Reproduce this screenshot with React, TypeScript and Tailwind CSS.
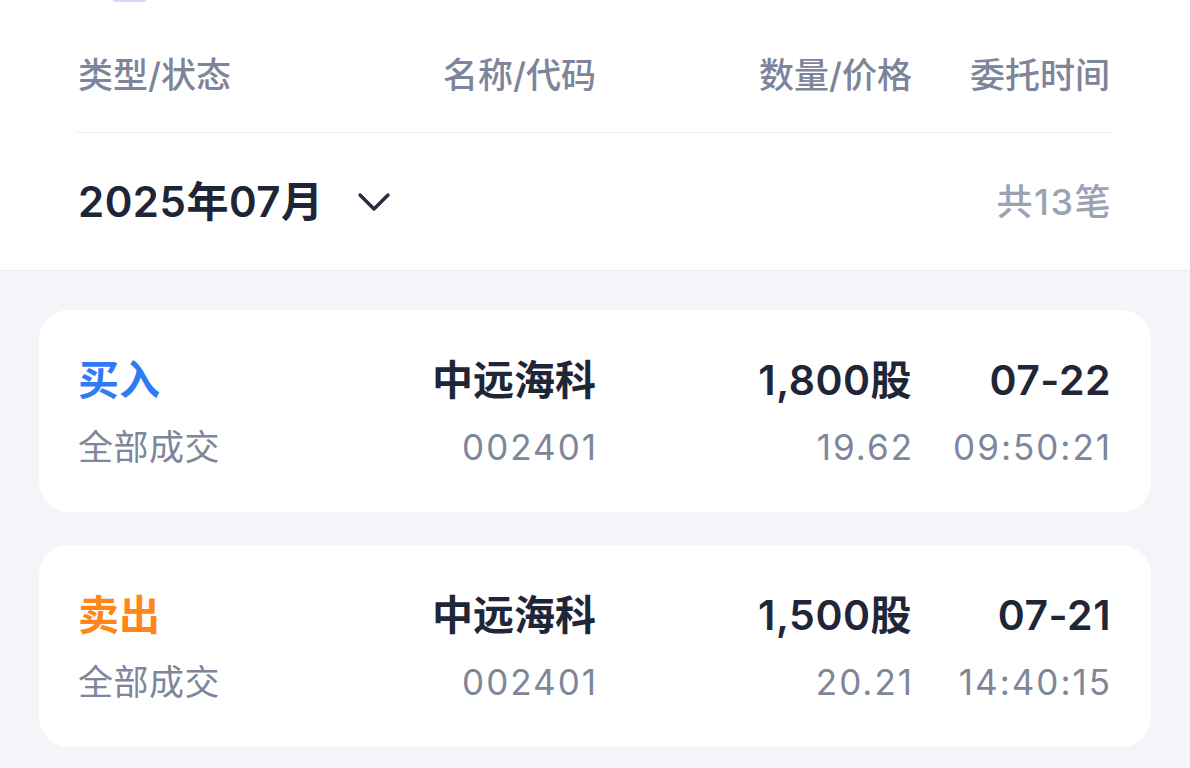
import React from "react";

const font = { fontFamily: '"Inter", "Noto Sans CJK SC", sans-serif' };

type Row = {
  type: string;
  color: string;
  status: string;
  name: string;
  code: string;
  qty: string;
  price: string;
  date: string;
  time: string;
};

const rows: Row[] = [
  { type: "买入", color: "text-[#2e7bf5]", status: "全部成交", name: "中远海科", code: "002401", qty: "1,800股", price: "19.62", date: "07-22", time: "09:50:21" },
  { type: "卖出", color: "text-[#ff8618]", status: "全部成交", name: "中远海科", code: "002401", qty: "1,500股", price: "20.21", date: "07-21", time: "14:40:15" },
];

function Card({ r }: { r: Row }) {
  return (
    <div className="bg-white rounded-[30px] h-[202px] px-[39px] pt-[46px] flex flex-col gap-[21px]">
      <div className="flex items-center h-[48px] text-[41px] font-semibold text-[#1f2637] leading-none">
        <div className={`w-[220px] ${r.color}`}>{r.type}</div>
        <div className="w-[298px] text-right">{r.name}</div>
        <div className="w-[316px] text-right">
          <span className="tracking-[0.5px]">{r.qty}</span>
        </div>
        <div className="w-[198px] text-right">
          <span className="tracking-[0.5px] -mr-[1px]">{r.date}</span>
        </div>
      </div>
      <div className="flex items-center h-[44px] text-[35px] text-[#7d869a] leading-none">
        <div className="w-[220px] tracking-[0.5px]">{r.status}</div>
        <div className="w-[298px] text-right">
          <span className="tracking-[2px] -mr-[2px]">{r.code}</span>
        </div>
        <div className="w-[316px] text-right">
          <span className="tracking-[2px] -mr-[2px]">{r.price}</span>
        </div>
        <div className="w-[198px] text-right">
          <span className="tracking-[2px] -mr-[2px]">{r.time}</span>
        </div>
      </div>
    </div>
  );
}

export default function App() {
  return (
    <div className="w-[1190px] h-[768px] overflow-hidden bg-[#f4f5f9]" style={font}>
      <div className="bg-white border-b border-[#ebedf2] h-[271px] relative">
        <div className="absolute left-[113px] top-0 w-[33px] h-[2px] bg-[#cfdaf8] rounded-b" />
        <div className="px-[78px] pt-[52px]">
          <div className="flex items-center h-[46px] text-[35px] font-medium text-[#7c8599] leading-none">
            <div className="w-[220px]">类型/状态</div>
            <div className="w-[298px] text-right">名称/代码</div>
            <div className="w-[316px] text-right">数量/价格</div>
            <div className="w-[198px] text-right">委托时间</div>
          </div>
        </div>
        <div className="mx-[76px] mt-[34px] border-t border-[#eef0f5] w-[1035px]" />
        <div className="px-[78px] flex items-center justify-between h-[137px]">
          <div className="flex items-center">
            <span className="text-[42px] font-semibold text-[#1e2536] leading-none tracking-[0.5px]">2025年07月</span>
            <svg className="ml-[33px]" width="34" height="24" viewBox="0 0 34 24" fill="none">
              <path d="M3 5 L17 19 L31 5" stroke="#262d40" strokeWidth="3.4" strokeLinecap="round" strokeLinejoin="round" />
            </svg>
          </div>
          <span className="text-[36px] font-medium text-[#9aa2b4] leading-none tracking-[1.5px]">共13笔</span>
        </div>
      </div>
      <div className="px-[39px] pt-[39px] flex flex-col gap-[33px]">
        {rows.map((r, i) => (
          <Card key={i} r={r} />
        ))}
      </div>
    </div>
  );
}
